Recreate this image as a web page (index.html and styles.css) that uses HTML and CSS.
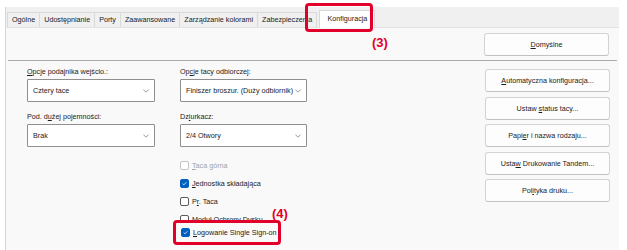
FILE: index.html
```html
<!DOCTYPE html>
<html lang="pl">
<head>
<meta charset="utf-8">
<link rel="stylesheet" href="styles.css">
</head>
<body>
<div class="window">
  <div class="tabs">
    <div class="tab">Ogólne</div>
    <div class="tab">Udostępnianie</div>
    <div class="tab">Porty</div>
    <div class="tab">Zaawansowane</div>
    <div class="tab">Zarządzanie kolorami</div>
    <div class="tab">Zabezpieczenia</div>
    <div class="tab active">Konfiguracja</div>
  </div>
  <div class="page">
    <div class="head">
      <button class="btn btn-default"><u>D</u>omyślne</button>
    </div>
    <div class="body">
      <div class="col col-left">
        <div class="label"><u>O</u>pcje podajnika wejścio.:</div>
        <div class="select">Cztery tace<svg class="chev" viewBox="0 0 7 4"><path d="M0.5 0.5 L3.5 3.3 L6.5 0.5"/></svg></div>
        <div class="label">Pod. d<u>u</u>żej pojemności:</div>
        <div class="select">Brak<svg class="chev" viewBox="0 0 7 4"><path d="M0.5 0.5 L3.5 3.3 L6.5 0.5"/></svg></div>
      </div>
      <div class="col col-mid">
        <div class="label">Op<u>c</u>je tacy odbiorczej:</div>
        <div class="select">Finiszer broszur. (Duży odbiornik)<svg class="chev" viewBox="0 0 7 4"><path d="M0.5 0.5 L3.5 3.3 L6.5 0.5"/></svg></div>
        <div class="label">Dz<u>i</u>urkacz:</div>
        <div class="select">2/4 Otwory<svg class="chev" viewBox="0 0 7 4"><path d="M0.5 0.5 L3.5 3.3 L6.5 0.5"/></svg></div>
        <div class="checks">
          <div class="check disabled"><span class="box"></span><span><u>T</u>aca górna</span></div>
          <div class="check"><span class="box on"><svg viewBox="0 0 9 9"><path d="M2.2 4.7 L3.8 6.2 L6.9 2.9"/></svg></span><span><u>J</u>ednostka składająca</span></div>
          <div class="check"><span class="box"></span><span>P<u>r</u>. Taca</span></div>
          <div class="check"><span class="box"></span><span><u>M</u>oduł Ochrony Dysku</span></div>
        </div>
      </div>
      <div class="col col-right">
        <button class="btn"><u>A</u>utomatyczna konfiguracja...</button>
        <button class="btn">Ustaw <u>s</u>tatus tacy...</button>
        <button class="btn">Papi<u>e</u>r i nazwa rodzaju...</button>
        <button class="btn">Usta<u>w</u> Drukowanie Tandem...</button>
        <button class="btn">Pol<u>i</u>tyka druku...</button>
      </div>
    </div>
  </div>

  <div class="mark mark-tab"></div>
  <div class="callout callout-3">(3)</div>
  <div class="mark mark-sso">
    <div class="check"><span class="box on"><svg viewBox="0 0 9 9"><path d="M2.2 4.7 L3.8 6.2 L6.9 2.9"/></svg></span><span><u>L</u>ogowanie Single Sign-on</span></div>
  </div>
  <div class="callout callout-4">(4)</div>
</div>
</body>
</html>
```

FILE: styles.css
```css
* { box-sizing: border-box; }

html, body {
  margin: 0;
  width: 627px;
  height: 250px;
  overflow: hidden;
  background: #ffffff;
}

body {
  font-family: "Liberation Sans", Arial, sans-serif;
  font-size: 7.2px;
  color: #1b1b1b;
}

u { text-decoration: underline; text-underline-offset: 1px; }

.window {
  position: relative;
  margin: 7px 0 0 5px;
  width: 614px;
  height: 243px;
  background: #f0f0f0;
  border-left: 1px solid #d6d6d6;
}

/* tabs */
.tabs {
  display: flex;
  align-items: flex-end;
  height: 20px;
  padding-left: 1px;
}

.tab {
  height: 15px;
  line-height: 14px;
  padding: 0 4px;
  background: #f0f0f0;
  border: 1px solid #d9d9d9;
  border-left: none;
  border-bottom: none;
  white-space: nowrap;
}

.tab:first-child { border-left: 1px solid #d9d9d9; }

.tab.active {
  height: 18px;
  line-height: 16px;
  padding: 0 7px;
  margin-left: 2px;
  background: #ffffff;
  border-left: 1px solid #d9d9d9;
  position: relative;
  top: 1px;
}

/* page */
.page {
  background: #f9f9f9;
  height: 223px;
  border-top: 1px solid #e3e3e3;
}

.head {
  display: flex;
  justify-content: flex-end;
  height: 33px;
  padding: 5px 8px 0 0;
  margin: 0 2px 0 2px;
  border-bottom: 1px solid #a9a9a9;
}

.btn {
  display: block;
  font: inherit;
  color: #1b1b1b;
  width: 125px;
  height: 23px;
  padding: 0;
  background: #fdfdfd;
  border: 1px solid #d3d3d3;
  border-bottom-color: #c2c2c2;
  border-radius: 3px;
  text-align: center;
}

.body {
  display: flex;
  padding-top: 6px;
}

.col { display: flex; flex-direction: column; }

.col-left { margin-left: 21px; width: 128px; }
.col-mid { margin-left: 25px; width: 127px; }
.col-right { margin-left: 178px; width: 126px; padding-top: 2px; gap: 4.5px; }

.label {
  height: 10px;
  line-height: 10px;
  margin-bottom: 2px;
  white-space: nowrap;
}

.select {
  position: relative;
  height: 23px;
  line-height: 21px;
  padding-left: 5px;
  background: #ffffff;
  border: 1px solid #8f8f8f;
  border-radius: 1px;
  margin-bottom: 10px;
  white-space: nowrap;
}

.chev {
  position: absolute;
  right: 5px;
  top: 9px;
  width: 6px;
  height: 4px;
  fill: none;
  stroke: #6f6f6f;
  stroke-width: 0.8;
}

/* checkboxes */
.checks {
  display: flex;
  flex-direction: column;
  margin-top: -1px;
}

.check {
  display: flex;
  align-items: center;
  gap: 3px;
  height: 18px;
  white-space: nowrap;
}

.box {
  width: 9px;
  height: 9px;
  border: 1px solid #5a5a5a;
  border-radius: 2px;
  background: #ffffff;
  flex: none;
}

.box.on {
  background: #0060c0;
  border-color: #0060c0;
}

.box svg {
  display: block;
  width: 7px;
  height: 7px;
  fill: none;
  stroke: #ffffff;
  stroke-width: 1;
}

.check.disabled { color: #a3a3a3; }
.check.disabled .box { border-color: #c4c4c4; }

/* annotations */
.mark {
  position: absolute;
  border: 3px solid #e2002a;
  border-radius: 4px;
}

.mark-tab {
  left: 299px;
  top: -4px;
  width: 68px;
  height: 29px;
}

.mark-sso {
  left: 167px;
  top: 213px;
  width: 108px;
  height: 25px;
  background: #f9f9f9;
  padding-left: 5px;
}

.mark-sso .check { height: 19px; }

.callout {
  position: absolute;
  color: #e2002a;
  font-weight: bold;
  font-size: 13px;
  line-height: 13px;
}

.callout-3 { left: 366px; top: 29px; }
.callout-4 { left: 266px; top: 200px; }
```
